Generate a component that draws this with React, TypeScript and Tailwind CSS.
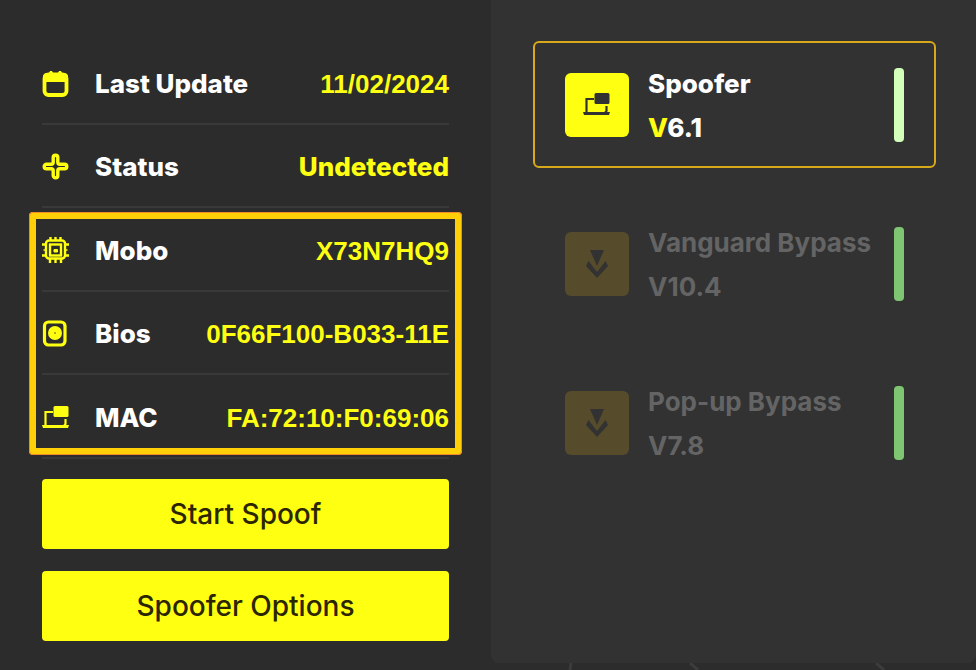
import type { ReactNode } from "react";

type InfoRow = {
    label: string;
    value: string;
    icon: ReactNode;
    numeric?: boolean;
};

type Product = {
    name: string;
    version: string;
    active?: boolean;
};

function CalendarIcon() {
    return (
        <svg viewBox="0 0 28 28" className="size-7" fill="none" aria-hidden="true">
            <rect x="2.5" y="4.5" width="22" height="20.5" rx="4" stroke="currentColor" strokeWidth="3.8" />
            <path d="M1 12V7a4 4 0 0 1 4-4h2l1-2h2l1 2h5l1-2h2l1 2h2a4 4 0 0 1 4 4v5z" fill="currentColor" />
        </svg>
    );
}

function StatusIcon() {
    return (
        <svg viewBox="0 0 28 28" className="size-7" fill="none" stroke="currentColor" strokeLinejoin="round" aria-hidden="true">
            <path
                d="M11.2 4.5a2.3 2.3 0 0 1 4.600 0v4.700a2 2 0 0 0 2 2h4.700a2.300 2.300 0 0 1 0 4.600h-4.700a2 2 0 0 0-2 2v4.700a2.300 2.300 0 0 1-4.600 0v-4.700a2 2 0 0 0-2-2H4.500a2.300 2.300 0 0 1 0-4.600h4.700a2 2 0 0 0 2-2z"
                strokeWidth="3.4"
            />
        </svg>
    );
}

function ChipIcon() {
    return (
        <svg viewBox="0 0 28 28" className="size-7" fill="none" stroke="currentColor" aria-hidden="true">
            <rect x="4" y="3.5" width="19" height="18" rx="3" strokeWidth="2.4" />
            <rect x="8" y="7.5" width="11" height="11" strokeWidth="2.4" />
            <path d="M12 15v-2.5h3.500v2.500z" fill="currentColor" strokeWidth="1" />
            <path
                d="M8.5 0v3M13.5 0v3M18.5 0v3M8 21v5M13.5 21v5M19 21v5M0 7.5h4M0 18.5h4M23 7.5h4M23 18.5h4"
                strokeWidth="2.4"
            />
            <path d="M1.500 13h3M22.500 13h3" strokeWidth="1.5" />
        </svg>
    );
}

function BiosIcon() {
    return (
        <svg viewBox="0 0 28 28" className="size-7" fill="none" aria-hidden="true">
            <rect x="2.5" y="2" width="20.5" height="23" rx="4" stroke="currentColor" strokeWidth="3.2" />
            <circle cx="13" cy="13" r="7" fill="currentColor" />
            <circle cx="13" cy="13" r="1" fill="#a0901c" />
        </svg>
    );
}

function DevicesIcon() {
    return (
        <svg viewBox="0 0 28 28" className="size-7" fill="none" aria-hidden="true">
            <rect x="11.5" y="2" width="15" height="11" rx="1.5" fill="currentColor" />
            <path d="M11 8H3.500v14M23.500 15v5l-1.500 2" stroke="currentColor" strokeWidth="2.2" />
            <path d="M0 21h27l-1 3H1z" fill="currentColor" />
        </svg>
    );
}

function BypassIcon() {
    return (
        <svg viewBox="0 0 28 28" className="size-7" fill="currentColor" aria-hidden="true">
            <path d="M7 0h14l-7 16z" />
            <path d="M5.5 11l8.500 11 8.500-11 2.500 5-11 12L3 16z" />
        </svg>
    );
}

const generalInfo: InfoRow[] = [
    { label: "Last Update", value: "11/02/2024", icon: <CalendarIcon />, numeric: true },
    { label: "Status", value: "Undetected", icon: <StatusIcon /> },
];

const hardwareInfo: InfoRow[] = [
    { label: "Mobo", value: "X73N7HQ9", icon: <ChipIcon />, numeric: true },
    { label: "Bios", value: "0F66F100-B033-11E", icon: <BiosIcon />, numeric: true },
    { label: "MAC", value: "FA:72:10:F0:69:06", icon: <DevicesIcon />, numeric: true },
];

const products: Product[] = [
    { name: "Spoofer", version: "6.1", active: true },
    { name: "Vanguard Bypass", version: "10.4" },
    { name: "Pop-up Bypass", version: "7.8" },
];

function InfoItem({ row }: { row: InfoRow }) {
    return (
        <div className="flex items-center border-b-2 border-[#393939] pt-1 text-[26px] leading-8 font-extrabold">
            <span className="w-[53px] shrink-0 text-[#ffff12]">{row.icon}</span>
            <dt className="text-white">{row.label}</dt>
            <dd
                className={`ml-auto whitespace-nowrap text-[#ffff12] ${
                    row.numeric ? "font-['Liberation_Sans',sans-serif]" : ""
                }`}
            >
                {row.value}
            </dd>
        </div>
    );
}

function ProductCard({ product }: { product: Product }) {
    const { name, version, active } = product;

    return (
        <button
            type="button"
            disabled={!active}
            className={`flex h-[127px] w-full items-center rounded-md border-2 px-[30px] text-left ${
                active ? "border-[#d8a91a] text-white" : "border-transparent text-[#646464]"
            }`}
        >
            <span
                className={`flex size-16 shrink-0 items-center justify-center rounded-md text-[#323232] ${
                    active ? "bg-[#ffff12]" : "bg-[#564b2b]"
                }`}
            >
                {active ? <DevicesIcon /> : <BypassIcon />}
            </span>
            <span
                className={`ml-[19px] flex flex-col pt-[2px] text-[26px] leading-[44px] whitespace-nowrap ${
                    active ? "font-extrabold" : "font-bold"
                }`}
            >
                <span>{name}</span>
                <span>
                    <span className={active ? "text-[#ffff12]" : ""}>V</span>
                    {version}
                </span>
            </span>
            <span className={`ml-auto h-[74px] w-[10px] shrink-0 rounded ${active ? "bg-[#d3ffba]" : "bg-[#7fc673]"}`} />
        </button>
    );
}

export default function App() {
    return (
        <div className="grid min-h-screen grid-cols-[491fr_485fr] bg-[#2c2c2c] font-['Inter',sans-serif]">
            <section className="flex flex-col px-[42px] pt-[41px]">
                <dl className="grid h-[167px] auto-rows-fr">
                    {generalInfo.map((row) => (
                        <InfoItem key={row.label} row={row} />
                    ))}
                </dl>
                <div className="relative">
                    <dl className="grid h-[251px] auto-rows-fr">
                        {hardwareInfo.map((row) => (
                            <InfoItem key={row.label} row={row} />
                        ))}
                    </dl>
                    {/* highlight around the hardware ids */}
                    <div className="pointer-events-none absolute -inset-x-[13px] top-1 bottom-1 rounded-sm border-7 border-[#ffd008] outline-1 -outline-offset-1 outline-[#f08a2a]" />
                </div>
                <div className="mt-5 flex flex-col gap-[22px]">
                    <button type="button" className="h-[70px] rounded bg-[#ffff12] text-[28px] font-medium text-[#2c2600]">
                        Start Spoof
                    </button>
                    <button type="button" className="h-[70px] rounded bg-[#ffff12] text-[28px] font-medium text-[#2c2600]">
                        Spoofer Options
                    </button>
                </div>
            </section>

            <section className="flex flex-col">
                <div className="flex flex-1 flex-col gap-8 rounded-b-lg bg-[#323232] pt-[41px] pr-10 pl-[42px]">
                    {products.map((product) => (
                        <ProductCard key={product.name} product={product} />
                    ))}
                </div>
                <svg viewBox="0 0 485 7" className="h-[7px] w-full" fill="none" stroke="#3c3c3c" strokeWidth="3" aria-hidden="true">
                    <path d="M80 0l-1 7M199 0l8 7M385 0l8 7" />
                </svg>
            </section>
        </div>
    );
}
